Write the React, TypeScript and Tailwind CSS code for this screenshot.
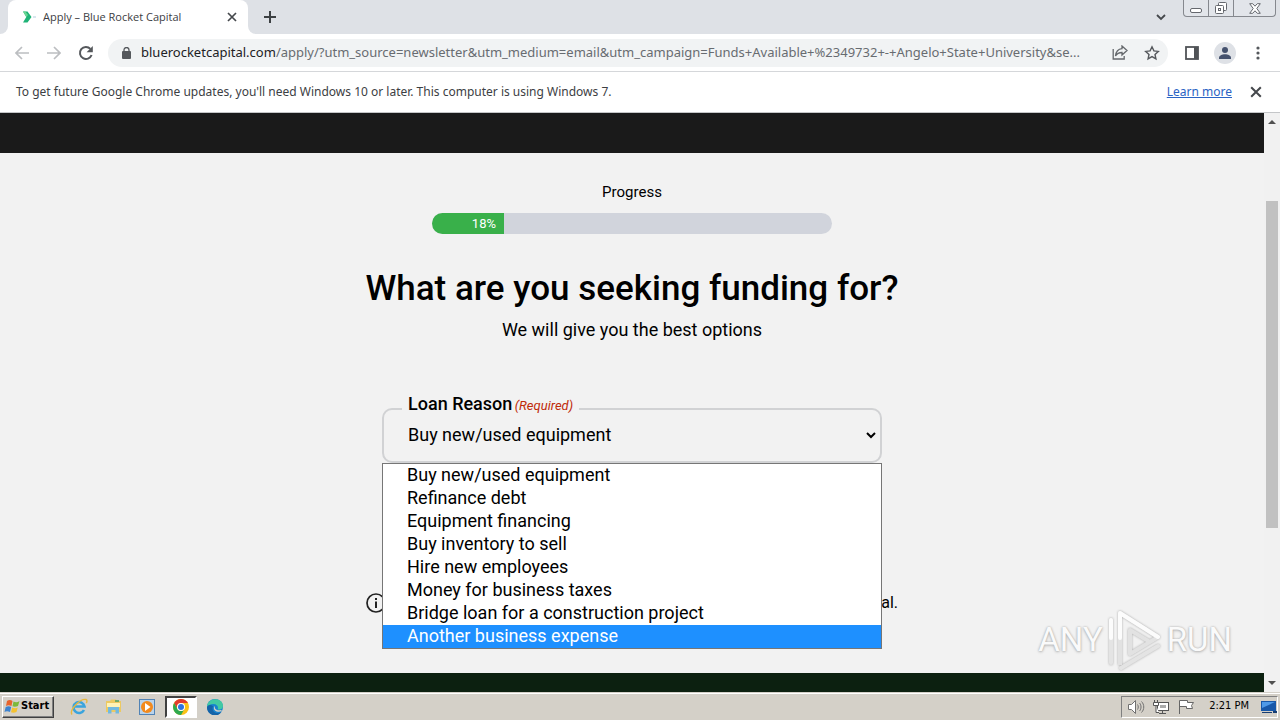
import { useState } from "react";
import type { ReactNode } from "react";

const reasons = [
  "Buy new/used equipment",
  "Refinance debt",
  "Equipment financing",
  "Buy inventory to sell",
  "Hire new employees",
  "Money for business taxes",
  "Bridge loan for a construction project",
  "Another business expense",
];

function IconButton({ label, className = "", children }: { label: string; className?: string; children: ReactNode }) {
  return (
    <button type="button" aria-label={label} className={`flex shrink-0 items-center justify-center ${className}`}>
      {children}
    </button>
  );
}

function CloseIcon({ size }: { size: number }) {
  return (
    <svg width={size} height={size} viewBox="0 0 10 10" fill="none" stroke="#45484c" strokeWidth="1.7">
      <path d="M1 1l8 8M9 1L1 9" />
    </svg>
  );
}

function TabStrip() {
  return (
    <div className="flex h-[34px] shrink-0 items-stretch bg-[#dee1e6]">
      <div className="flex w-2 bg-white"><div className="flex-1 rounded-br-lg bg-[#dee1e6]" /></div>
      <div className="flex w-60 items-center rounded-t-lg bg-white pr-2 pl-3.5">
        <svg width="14" height="12" viewBox="0 0 14 12">
          <path d="M1 .5h4.5L9.5 6l-4 5.500H1L4.300 6z" fill="#1fb377" />
          <path d="M1 .5h2.300L6 4 4.300 6z" fill="#69d692" />
          <path d="M11 6h3" stroke="#d8e6ee" strokeWidth="2" />
        </svg>
        <span className="ml-[7px] flex-1 truncate font-['Open_Sans',sans-serif] text-[11px] text-[#3c4043]">Apply – Blue Rocket Capital</span>
        <IconButton label="Close tab" className="size-4"><CloseIcon size={10} /></IconButton>
      </div>
      <div className="flex w-2 bg-white"><div className="flex-1 rounded-bl-lg bg-[#dee1e6]" /></div>
      <IconButton label="New tab" className="w-7">
        <svg width="12" height="12" viewBox="0 0 12 12" stroke="#3c4043" strokeWidth="2"><path d="M6 0v12M0 6h12" /></svg>
      </IconButton>
      <div className="flex-1" />
      <IconButton label="Search tabs" className="mr-2 w-7">
        <svg width="10" height="7" viewBox="0 0 10 7" fill="none" stroke="#45484c" strokeWidth="1.8"><path d="M1 1l4 4 4-4" /></svg>
      </IconButton>
      <div className="mr-1 flex h-[17px] rounded-b border border-t-0 border-[#85888e] bg-[#e2e5ea]">
        <IconButton label="Minimize" className="w-[25px] border-r border-[#85888e]">
          <svg width="12" height="16" viewBox="0 0 12 16" fill="#fff" stroke="#65686e"><rect x=".5" y="8.500" width="11" height="4" rx="1.500" /></svg>
        </IconButton>
        <IconButton label="Restore" className="w-[25px] border-r border-[#85888e]">
          <svg width="14" height="14" viewBox="0 0 14 14" fill="#fff" stroke="#65686e">
            <rect x="4.500" y="1.500" width="8" height="8" rx="1" /><rect x="1.500" y="4.500" width="8" height="8" rx="1" /><rect x="4.500" y="7.500" width="2" height="2" />
          </svg>
        </IconButton>
        <IconButton label="Close window" className="w-[41px]">
          <svg width="12" height="11" viewBox="0 0 12 11" fill="#fff" stroke="#65686e"><path d="M.7.700h3L6 3.200 8.300.700h3L7.800 5.500l3.500 4.800h-3L6 7.800l-2.300 2.500h-3l3.500-4.800z" /></svg>
        </IconButton>
      </div>
    </div>
  );
}

function Toolbar() {
  return (
    <div className="flex h-[38px] shrink-0 items-center border-b border-[#d5d7da] bg-white pr-2.5 pl-2.5">
      <IconButton label="Back" className="w-6">
        <svg width="14" height="14" viewBox="0 0 14 14" fill="none" stroke="#bcbec1" strokeWidth="1.700"><path d="M14 7H1.500M7 1L1 7l6 6" /></svg>
      </IconButton>
      <IconButton label="Forward" className="ml-2 w-6">
        <svg width="14" height="14" viewBox="0 0 14 14" fill="none" stroke="#bcbec1" strokeWidth="1.700"><path d="M0 7h12.500M7 1l6 6-6 6" /></svg>
      </IconButton>
      <IconButton label="Reload" className="ml-2 w-6">
        <svg width="16" height="16" viewBox="0 0 16 16" fill="none" stroke="#55585c" strokeWidth="2"><path d="M13.600 10A6 6 0 1 1 12.400 3.900" /><path d="M14.800 1v6.200H8.600z" fill="#55585c" stroke="none" /></svg>
      </IconButton>
      <div className="ml-2.5 flex h-7 min-w-0 flex-1 items-center rounded-full bg-[#f1f3f4] pr-1 pl-3">
        <svg className="ml-0.5 shrink-0" width="9" height="12" viewBox="0 0 9 12"><rect y="4" width="9" height="8" rx="1" fill="#55585c" /><path d="M2 5V3a2.500 2.500 0 0 1 5 0v2" fill="none" stroke="#55585c" strokeWidth="1.300" /></svg>
        <span className="ml-2.5 min-w-0 flex-1 truncate text-[13px] text-[#686c71]">
          <span className="text-[#202124]">bluerocketcapital.com</span>/apply/?utm_source=newsletter&amp;utm_medium=email&amp;utm_campaign=Funds+Available+%2349732+-+Angelo+State+University&amp;se...
        </span>
        <IconButton label="Share" className="w-6">
          <svg width="16" height="15" viewBox="0 0 16 15" fill="none" stroke="#65686c" strokeWidth="1.300"><path d="M1.200 4v10h11v-3" /><path d="M10 1l5 4.500L10 10V7.500C7 7.500 5 8.500 3.500 11 4 6.500 6.500 4 10 3.700z" /></svg>
        </IconButton>
        <IconButton label="Bookmark" className="ml-2 w-6">
          <svg width="16" height="16" viewBox="0 0 16 16" fill="none" stroke="#55585c" strokeWidth="1.400"><path d="M8 1.800l1.900 4.100 4.400.500-3.300 3 .900 4.400L8 11.600l-3.900 2.200.9-4.400-3.300-3 4.400-.500z" /></svg>
        </IconButton>
      </div>
      <IconButton label="Side panel" className="ml-3 w-6">
        <svg width="14" height="14" viewBox="0 0 14 14"><rect x="1" y="1" width="12" height="12" fill="none" stroke="#505357" strokeWidth="1.800" /><path d="M9 1h4v12H9z" fill="#505357" /></svg>
      </IconButton>
      <IconButton label="Profile" className="ml-2.5 size-[22px] rounded-full bg-[#dee1e6]">
        <svg width="14" height="14" viewBox="0 0 14 14" fill="#45526e"><circle cx="7" cy="4" r="3" /><path d="M1 12c0-5 12-5 12 0v1H1z" /></svg>
      </IconButton>
      <IconButton label="Menu" className="ml-2.5 w-6">
        <svg width="4" height="14" viewBox="0 0 4 14" fill="#55585c"><circle cx="2" cy="2" r="1.600" /><circle cx="2" cy="7" r="1.600" /><circle cx="2" cy="12" r="1.600" /></svg>
      </IconButton>
    </div>
  );
}

function Watermark() {
  return (
    <div className="absolute right-8 bottom-5 flex items-center gap-1 font-[Roboto,sans-serif] text-[33px] leading-[64px] text-[#fafafa] [text-shadow:0_0_2px_#aaa,0_1px_3px_#bbb]">
      <span>ANY</span>
      <svg className="drop-shadow-[0_0_1px_#aaa]" width="56" height="64" viewBox="0 0 56 64" fill="none" strokeWidth="4" strokeLinejoin="round">
        <path d="M4 12v43M14 60l37-22" stroke="#e4e4e4" strokeLinecap="round" />
        <path d="M13 57V5l38 24-28 17V22l20 12" stroke="#e2e2e2" />
        <path d="M4 30V12M13 30V5l38 24" stroke="#fcfcfc" strokeLinecap="round" />
      </svg>
      <span>RUN</span>
    </div>
  );
}

function LoanForm() {
  const [reason, setReason] = useState(reasons[0]);
  const [active, setActive] = useState(reasons.length - 1);
  return (
    <main className="flex flex-1 flex-col items-center bg-[#f2f2f2] font-[Roboto,sans-serif] text-black">
      <div id="progress-label" className="mt-7 text-[15px] leading-[22px]">Progress</div>
      <div role="progressbar" aria-labelledby="progress-label" aria-valuenow={18} className="mt-2.5 h-[21px] w-full max-w-[400px] overflow-hidden rounded-full bg-[#d1d4dc]">
        <div className="h-full w-[18%] bg-[#39b04a] pr-2 text-right text-[13px] leading-[21px] text-white">18%</div>
      </div>
      <h1 className="mt-8 text-[35px] leading-[46px] font-medium">What are you seeking funding for?</h1>
      <p className="mt-1 text-[18px] leading-7">We will give you the best options</p>
      <div className="relative mt-16 w-full max-w-[500px]">
        <div className="relative flex h-[55px] items-stretch rounded-[10px] border-2 border-[#d1d2d4]">
          <label htmlFor="reason" className="absolute -top-[18px] left-[18px] bg-[#f2f2f2] px-1.5 text-[18px] leading-6 font-medium">
            Loan Reason <span className="-ml-0.5 text-[13px] font-normal text-[#c02b0a] italic">(Required)</span>
          </label>
          <select id="reason" value={reason} onChange={(e) => setReason(e.target.value)} className="w-full appearance-none bg-transparent px-6 pb-0.5 text-[18px] outline-none">
            {reasons.map((r) => <option key={r}>{r}</option>)}
          </select>
          <svg className="pointer-events-none absolute top-[22px] right-1" width="10" height="7" viewBox="0 0 10 7" fill="none" stroke="#000" strokeWidth="2"><path d="M1 1l4 4 4-4" /></svg>
        </div>
        <ul role="listbox" aria-label="Loan Reason" className="absolute top-[55px] left-0 z-10 w-full border border-[#767676] bg-white text-[18px] leading-[21px]">
          {reasons.map((r, i) => (
            <li
              key={r}
              role="option"
              aria-selected={r === reason}
              onMouseEnter={() => setActive(i)}
              onClick={() => setReason(r)}
              className={i === active ? "bg-[#1e90ff] px-6 pb-0.5 text-white" : "px-6 pb-0.5"}
            >
              {r}
            </li>
          ))}
        </ul>
      </div>
      <div className="mt-32 flex w-full max-w-[532px] items-center justify-between text-[16px] leading-6">
        <svg width="20" height="20" viewBox="0 0 20 20" fill="none" stroke="#222" strokeWidth="1.700"><circle cx="10" cy="10" r="9" /><path d="M10 8.500V15M10 5v2" strokeWidth="2" /></svg>
        <span>al.</span>
      </div>
    </main>
  );
}

function Scrollbar() {
  return (
    <div className="flex w-4 shrink-0 flex-col items-center bg-[#f1f1f1]" aria-hidden="true">
      <svg className="my-1.5" width="8" height="5" viewBox="0 0 8 5" fill="#505050"><path d="M0 5l4-4 4 4z" /></svg>
      <div className="flex w-full flex-1 flex-col items-center">
        <div className="h-[13%]" />
        <div className="h-[60%] w-3 bg-[#c1c1c1]" />
      </div>
      <svg className="my-1.5" width="8" height="5" viewBox="0 0 8 5" fill="#505050"><path d="M0 0l4 4 4-4z" /></svg>
    </div>
  );
}

function Taskbar() {
  return (
    <footer className="flex h-7 shrink-0 items-center border-t border-[#d4d0c8] bg-[#d4d0c8] px-0.5 shadow-[inset_0_1px_#fff]">
      <button type="button" className="flex h-[22px] w-[52px] items-center border border-t-white border-r-[#404040] border-b-[#404040] border-l-white pl-px font-['DejaVu_Sans_Condensed','DejaVu_Sans',sans-serif] text-[11px] font-bold text-black shadow-[inset_-1px_-1px_#808080]">
        <svg width="17" height="15" viewBox="0 0 17 15">
          <path d="M3 2c2-1.500 4-1 5.500 0L7.500 7c-2-1-4-1-5.500 0z" fill="#e8642c" /><path d="M9.500 2.500c2 1 4 1 6-.5L14 7c-2 1-4 1-5.500.3z" fill="#7cb93a" />
          <path d="M1.700 8c2-1 4-1 5.500 0L6 13c-2-1-4-1-5.500 0z" fill="#3d83cf" /><path d="M8.200 8.500c2 1 4 1 5.500 0L12.500 13c-2 1-4 1-5.500.3z" fill="#f4c230" />
        </svg>
        Start
      </button>
      <div className="ml-2 flex items-center">
        <IconButton label="Internet Explorer" className="h-[22px] w-[34px]">
          <svg width="18" height="18" viewBox="0 0 18 18" fill="none"><path d="M14 12a5.500 5.500 0 1 1 .5-3.500H5" stroke="#3aa4dd" strokeWidth="2.600" /><path d="M2 16.500C-1 12 10 .5 16 1.500c1.500.5 1 2.500.3 3.500" stroke="#e7b83d" strokeWidth="1.400" /></svg>
        </IconButton>
        <IconButton label="File Explorer" className="h-[22px] w-[34px]">
          <svg width="17" height="17" viewBox="0 0 17 17"><path d="M1 3h4l1-1.500h5L12 3h4v11H1z" fill="#ecc962" /><path d="M2 5h13v4H2z" fill="#fff2b5" /><path d="M3 15.500V9h11v6.500h-3.500V12h-4v3.500z" fill="#72b9df" /><path d="M10 3h4" stroke="#4b9e63" strokeWidth="1.500" /></svg>
        </IconButton>
        <IconButton label="Media Player" className="h-[22px] w-[34px]">
          <svg width="16" height="16" viewBox="0 0 16 16"><rect x=".5" y=".5" width="15" height="15" fill="#b9d3eb" stroke="#5183b5" /><circle cx="8" cy="8" r="6" fill="#f28a1d" /><path d="M6 4l5.500 4L6 12z" fill="#fff" /></svg>
        </IconButton>
        <IconButton label="Chrome" className="mx-px h-[22px] w-8 border-2 border-t-[#404040] border-r-white border-b-white border-l-[#404040] bg-white">
          <svg width="16" height="16" viewBox="0 0 16 16"><circle cx="8" cy="8" r="8" fill="#fbc116" /><path d="M1.100 4A8 8 0 0 1 15 4H8a4 4 0 0 0-3.500 6z" fill="#e33b2e" /><path d="M1.100 4A8 8 0 0 0 8 16l3.500-6a4 4 0 0 1-7 0z" fill="#2da94f" /><circle cx="8" cy="8" r="4" fill="#fff" /><circle cx="8" cy="8" r="3" fill="#2f73e0" /></svg>
        </IconButton>
        <IconButton label="Edge" className="h-[22px] w-[34px]">
          <svg width="16" height="16" viewBox="0 0 16 16"><circle cx="8" cy="8" r="8" fill="#1783cf" /><path d="M0 8C0-2 16-2.500 16 7c0 3-3 4-5.500 3.500C12 8 10 5 6.500 5 3 5 1 6.500 0 8z" fill="#42c9a3" /><path d="M6 7c-2 5 3 9 8.500 6A8 8 0 0 1 0 8c1-2 3-3 6-1z" fill="#1463a8" /><path d="M8 7c-1 3 2 5 6 4l1 1c-4 2-9 0-8-4z" fill="#d4d0c8" /></svg>
        </IconButton>
      </div>
      <div className="flex-1" />
      <div className="flex h-[22px] items-center border border-t-[#808080] border-r-white border-b-white border-l-[#808080] pl-1.5">
        <svg width="17" height="16" viewBox="0 0 17 16" stroke="#707070"><path d="M.5 5.500h3l4-4v13l-4-4h-3z" fill="#fff" /><path d="M9.500 5.500c1 1.500 1 3.500 0 5M11.500 4c2 2 2 6 0 8M13.500 2.500c3 3 3 8 0 11" fill="none" /></svg>
        <svg className="ml-2" width="17" height="16" viewBox="0 0 17 16" fill="#fff" stroke="#555"><rect x="4.500" y="3.500" width="11" height="8" /><path d="M7 6h6v3H7z" fill="#aaa" stroke="none" /><path d="M9.500 12v2.500M6 14.500h7M.5 3.500h5v3h-5zM1.500 1v2.500M4.500 1v2.500M3 6.500v7h3" /></svg>
        <svg className="ml-2" width="17" height="16" viewBox="0 0 17 16" fill="#fff" stroke="#666"><path d="M1.500 15V1.500h8v2h6l-2 3 1 3h-6v-2h-7" /></svg>
        <time className="ml-3.5 font-['DejaVu_Sans_Condensed','DejaVu_Sans',sans-serif] text-[11px] text-black">2:21 PM</time>
        <svg className="ml-3" width="16" height="14" viewBox="0 0 16 14"><path d="M0 1h15v10H0z" fill="#1858a9" /><path d="M1 2h13L1 8z" fill="#4f9ae8" /><path d="M1 12h10v1H1zM12 11h4v2h-4z" fill="#173d72" /></svg>
      </div>
    </footer>
  );
}

export default function App() {
  return (
    <div className="flex h-screen flex-col overflow-hidden bg-white font-['Noto_Sans',sans-serif]">
      <TabStrip />
      <Toolbar />
      <div className="flex h-[41px] shrink-0 items-center border-b border-[#c4c6c8] bg-white pr-4 pl-4 text-[12px] text-[#3c4043]">
        <span className="flex-1">To get future Google Chrome updates, you'll need Windows 10 or later. This computer is using Windows 7.</span>
        <a href="#learn" className="mr-4 text-[#2a63c4] underline">Learn more</a>
        <IconButton label="Dismiss" className="w-4"><CloseIcon size={12} /></IconButton>
      </div>
      <div className="flex min-h-0 flex-1">
        <div className="relative flex min-w-0 flex-1 flex-col">
          <header className="h-10 shrink-0 bg-[#1a1a1a]" />
          <LoanForm />
          <div className="h-[19px] shrink-0 bg-[#0c2010]" />
          <Watermark />
        </div>
        <Scrollbar />
      </div>
      <Taskbar />
    </div>
  );
}
